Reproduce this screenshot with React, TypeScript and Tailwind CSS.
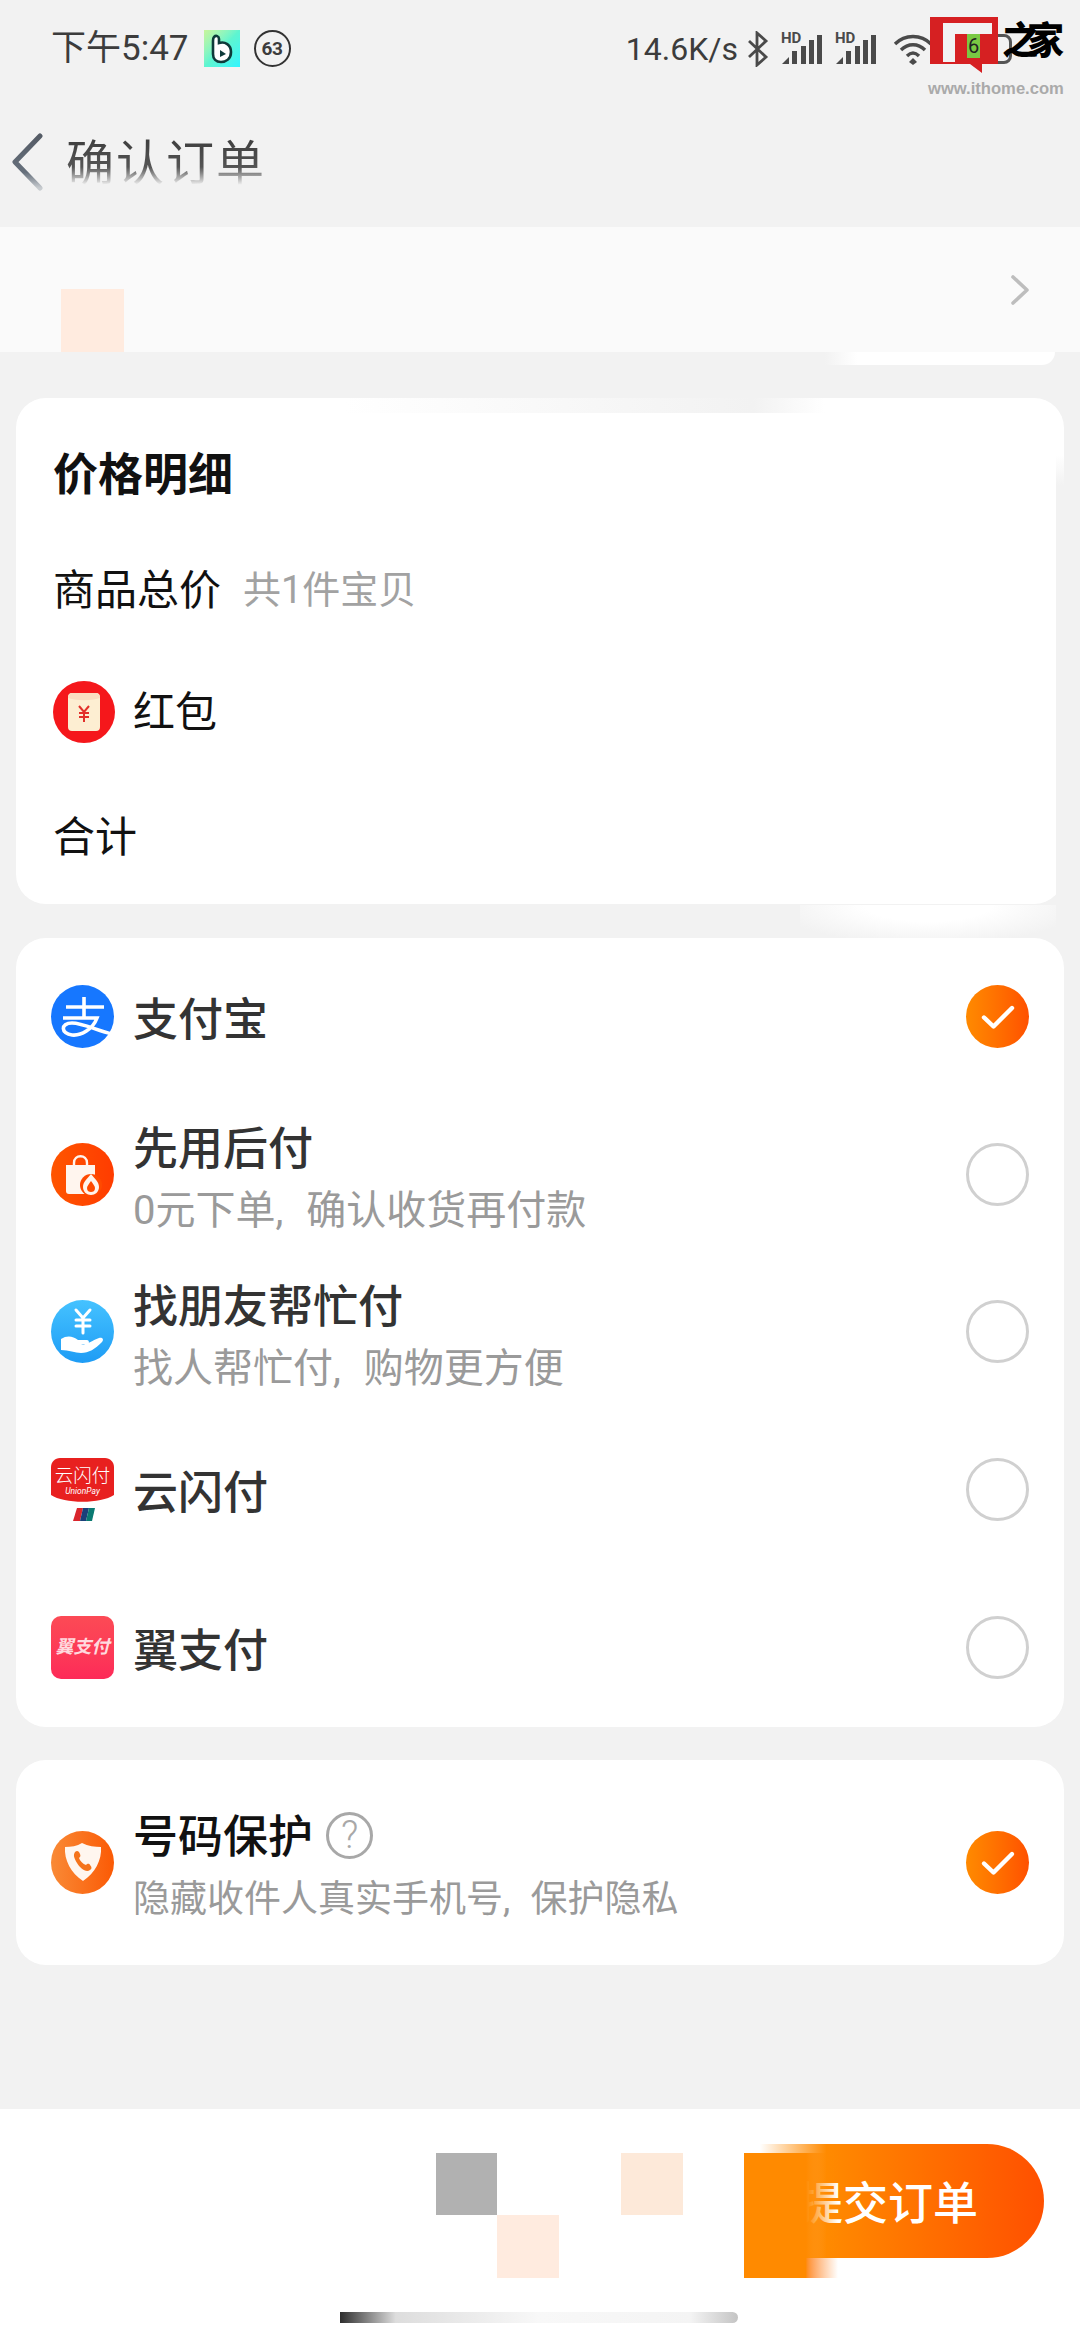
import React from "react";

function CheckOn() {
  return (
    <div className="w-[63px] h-[63px] rounded-full bg-gradient-to-r from-[#ff8a00] to-[#ff5000] flex items-center justify-center shrink-0">
      <svg width="36" height="28" viewBox="0 0 36 28" fill="none">
        <path d="M4 14.5 L13.5 23.5 L32 5" stroke="#fff" strokeWidth="4.4" strokeLinecap="round" strokeLinejoin="round" />
      </svg>
    </div>
  );
}

function CheckOff() {
  return <div className="w-[63px] h-[63px] rounded-full border-[3px] border-[#d0d0d0] shrink-0" />;
}

function Alipay() {
  return (
    <svg width="63" height="63" viewBox="0 0 63 63">
      <circle cx="31.5" cy="31.5" r="31.5" fill="#1677ff" />
      <g stroke="#fff" fill="none" strokeWidth="3.6">
        <path d="M15 22 H53" />
        <path d="M33 12 V33" />
        <path d="M12 33 H46 C42 44 30 51 21 50 C10 49 9 38 21 38 C32 38 47 46 61 49" />
      </g>
    </svg>
  );
}

function BuyLater() {
  return (
    <svg width="63" height="63" viewBox="0 0 63 63">
      <defs>
        <linearGradient id="bl" x1="0" x2="1" y1="0" y2="0">
          <stop offset="0" stopColor="#ff5500" />
          <stop offset="1" stopColor="#ff3c00" />
        </linearGradient>
      </defs>
      <circle cx="31.5" cy="31.5" r="31.5" fill="url(#bl)" />
      <path d="M15 22 H44 V48 C44 50 43 51 41 51 H18 C16 51 15 50 15 48 Z" fill="#fff5ee" />
      <path d="M23 26 V20 C23 11 36 11 36 20 V26" stroke="#fff5ee" strokeWidth="2.4" fill="none" />
      <circle cx="40" cy="42" r="11" fill="#ff4a00" />
      <path d="M40 31 C44 36 48 39 48 44 C48 49 44 52 40 52 C36 52 32 49 32 44 C32 39 36 36 40 31 Z" fill="#fff5ee" />
      <path d="M40 38 C42 41 44 43 44 45 C44 48 42 49 40 49 C38 49 36 48 36 45 C36 43 38 41 40 38 Z" fill="#ff4a00" />
    </svg>
  );
}

function FriendPay() {
  return (
    <svg width="63" height="63" viewBox="0 0 63 63">
      <defs>
        <linearGradient id="fp" x1="0" x2="0" y1="0" y2="1">
          <stop offset="0" stopColor="#45c2ff" />
          <stop offset="1" stopColor="#1e9cf5" />
        </linearGradient>
      </defs>
      <circle cx="31.5" cy="31.5" r="31.5" fill="url(#fp)" />
      <g stroke="#fff" strokeWidth="3" fill="none" strokeLinecap="round">
        <path d="M25 10 L32 18 L39 10" />
        <path d="M32 18 V33" />
        <path d="M25 20 H39" />
        <path d="M25 26 H39" />
      </g>
      <path d="M10 39 C16 35 22 36 27 40 H36 C38 40 39 43 36 44 H30 C34 46 40 41 48 38 C52 37 53 40 51 42 C44 49 38 53 30 53 C24 53 18 50 10 50 Z" fill="#fff" />
    </svg>
  );
}

function YunShanFu() {
  return (
    <svg width="63" height="63" viewBox="0 0 63 63">
      <path d="M9 0 H54 C59 0 63 4 63 9 V37 C50 46 13 46 0 37 V9 C0 4 4 0 9 0 Z" fill="#e8201f" />
      <text x="31.5" y="24" textAnchor="middle" fontSize="18.5" fill="#fff" fontFamily="Noto Sans CJK SC, sans-serif" fontWeight="300">云闪付</text>
      <text x="31.5" y="36" textAnchor="middle" fontSize="8.5" fill="#fff" fontStyle="italic" fontFamily="Roboto, sans-serif">UnionPay</text>
      <path d="M26 50 H32 L29 63 H22 Z" fill="#d9252c" />
      <path d="M32 50 H38 L35 63 H29 Z" fill="#1a3f7a" />
      <path d="M38 50 H44 L41 63 H35 Z" fill="#0a7a72" />
    </svg>
  );
}

function YiPay() {
  return (
    <div className="w-[63px] h-[63px] rounded-[10px] bg-gradient-to-b from-[#fc4a55] to-[#fd2a58] flex items-center justify-center">
      <span className="text-[18px] leading-none italic font-bold text-[#ffd9de] whitespace-nowrap">翼支付</span>
    </div>
  );
}

function PhoneShield() {
  return (
    <svg width="63" height="63" viewBox="0 0 63 63" className="shrink-0">
      <defs>
        <linearGradient id="ps" x1="0" x2="1" y1="0" y2="0">
          <stop offset="0" stopColor="#f98a36" />
          <stop offset="1" stopColor="#fb5a05" />
        </linearGradient>
      </defs>
      <circle cx="31.5" cy="31.5" r="31.5" fill="url(#ps)" />
      <path d="M31 12 C37 15 44 16 50 16 C51 29 44 42 32 50 C20 42 13 29 14 16 C20 16 26 15 31 12 Z" fill="#fff6ef" />
      <path d="M24 21 C26 19 28 20 29 23 C30 25 29 26 28 27 C29 30 32 33 35 34 C36 33 38 32 39 34 C41 36 41 38 39 39 C35 42 29 37 26 32 C23 27 22 24 24 21 Z" fill="#f5741c" />
    </svg>
  );
}

function RedPacket() {
  return (
    <svg width="62" height="62" viewBox="0 0 62 62">
      <circle cx="31" cy="31" r="31" fill="#f5171b" />
      <rect x="15" y="12" width="32" height="38" rx="4" fill="#fdeed2" />
      <path d="M15 17 C15 14 17 12 19 12 H43 C45 12 47 14 47 17 C37 20 25 20 15 17 Z" fill="#fbdcc0" />
      <g stroke="#e2302a" strokeWidth="2" fill="none">
        <path d="M26 25 L31 31 L36 25" />
        <path d="M31 31 V41" />
        <path d="M26 32 H36" />
        <path d="M26 36 H36" />
      </g>
    </svg>
  );
}

function Signal({ className }: { className?: string }) {
  return (
    <div className={"relative w-[41px] h-[32px] " + (className ?? "")}>
      <span className="absolute left-0 -top-[1px] text-[15px] leading-[13px] font-bold text-[#4a4a4a]" style={{ fontFamily: "Roboto, sans-serif" }}>HD</span>
      <svg className="absolute left-0 top-0" width="41" height="32" viewBox="0 0 41 32">
        <path d="M1 31 L8 24 V31 Z" fill="#4a4a4a" />
        <rect x="11" y="18" width="5" height="13" fill="#4a4a4a" />
        <rect x="20" y="13" width="5" height="18" fill="#4a4a4a" />
        <rect x="28" y="7" width="5" height="24" fill="#4a4a4a" />
        <rect x="36" y="2" width="5" height="29" fill="#4a4a4a" />
      </svg>
    </div>
  );
}

function StatusBar() {
  return (
    <div className="h-[96px] shrink-0 flex items-center pl-[51px] pr-[16px] pt-[1px] text-[#3c3c3c] text-[35px] leading-none">
      <span className="whitespace-nowrap">下午5:47</span>
      <div className="ml-[15px] w-[36px] h-[37px] bg-gradient-to-br from-[#c8f59a] via-[#5ef5d0] to-[#2ff5ff] flex items-center justify-center">
        <svg width="24" height="30" viewBox="0 0 24 30">
          <path d="M4 3 C6 1 9 2 9 5 V9 C15 7 21 11 21 18 C21 25 16 28 11 28 C6 28 3 25 3 20 V7 C3 5 3 4 4 3 Z" fill="#fff" stroke="#0e3a3a" strokeWidth="2.6" />
          <path d="M10 16 L16 20 L10 23 Z" fill="#0e3a3a" />
        </svg>
      </div>
      <div className="ml-[14px] w-[37px] h-[37px] rounded-full border-[2px] border-[#333] flex items-center justify-center">
        <span className="text-[19px] font-bold tracking-[-0.5px]">63</span>
      </div>
      <span className="ml-auto text-[32px] whitespace-nowrap">14.6K/s</span>
      <svg className="ml-[9px]" width="22" height="36" viewBox="0 0 22 36" fill="none">
        <path d="M2 10 L19 26 L10 34 V2 L19 10 L2 26" stroke="#4a4a4a" strokeWidth="2.8" />
      </svg>
      <Signal className="ml-[12px]" />
      <Signal className="ml-[13px]" />
      <svg className="ml-[16px]" width="42" height="32" viewBox="0 0 40 32" fill="none">
        <path d="M2 11 C12 1 28 1 38 11" stroke="#4a4a4a" strokeWidth="3.4" />
        <path d="M8 17 C15 10 25 10 32 17" stroke="#4a4a4a" strokeWidth="3.4" />
        <path d="M14 23 C18 19 22 19 26 23" stroke="#4a4a4a" strokeWidth="3.4" />
        <path d="M20 25 L24 29 L20 32 L16 29 Z" fill="#4a4a4a" />
      </svg>
      <div className="ml-[16px] w-[62px] h-[30px] rounded-[8px] border-[3px] border-[#555] mr-[52px]" />
    </div>
  );
}

function Header() {
  return (
    <div className="h-[131px] shrink-0 flex items-center">
      <svg className="ml-[11px]" width="34" height="58" viewBox="0 0 34 58" fill="none">
        <defs>
          <linearGradient id="bk" x1="0" x2="0" y1="0" y2="1">
            <stop offset="0" stopColor="#555c66" />
            <stop offset="0.7" stopColor="#66707c" />
            <stop offset="1" stopColor="#c8ccd0" />
          </linearGradient>
        </defs>
        <path d="M29 3 L4 29 L29 55" stroke="url(#bk)" strokeWidth="5" strokeLinecap="round" strokeLinejoin="round" />
      </svg>
      <span className="ml-[21px] mt-[5px] text-[48px] leading-[60px] tracking-[2px] bg-gradient-to-b from-[#3a3a3a] via-[#555] via-55% to-[#f2f2f2] to-85% bg-clip-text text-transparent whitespace-nowrap">
        确认订单
      </span>
    </div>
  );
}

function PayRow({ icon, title, sub, on }: { icon: React.ReactNode; title: string; sub?: string; on?: boolean }) {
  return (
    <div className="h-[157.6px] flex items-center pl-[35px] pr-[35px]">
      <div className="w-[63px] flex justify-center shrink-0">{icon}</div>
      <div className="ml-[19px] pt-[9px] flex-1 flex flex-col">
        <span className="text-[45px] leading-[60px] font-medium text-[#333]">{title}</span>
        {sub && <span className="mt-[5px] text-[40px] leading-[52px] text-[#9a9a9a] whitespace-nowrap [word-spacing:13px]">{sub}</span>}
      </div>
      {on ? <CheckOn /> : <CheckOff />}
    </div>
  );
}

export default function App() {
  return (
    <div
      className="relative w-[1080px] h-[2340px] overflow-hidden bg-[#f2f2f2] flex flex-col"
      style={{ fontFamily: '"Roboto", "Noto Sans CJK SC", sans-serif' }}
    >
      <StatusBar />
      <Header />

      <div className="h-[125px] shrink-0 bg-[#fafafa] flex items-center justify-end pr-[50px]">
        <svg width="20" height="32" viewBox="0 0 20 32" fill="none">
          <path d="M3 3 L17 16 L3 29" stroke="#bdbdbd" strokeWidth="3.6" strokeLinecap="round" strokeLinejoin="round" />
        </svg>
      </div>
      <div className="h-[13px] shrink-0 ml-[825px] mr-[25px] bg-gradient-to-r from-[#f2f2f2] to-white to-[14%] rounded-br-[26px]" />

      <div className="mt-[33px] mx-[16px] h-[506px] shrink-0 bg-white rounded-[30px] px-[37px] pt-[48px] text-[#111]">
        <div className="h-[60px] flex items-center text-[45px] font-bold">价格明细</div>
        <div className="mt-[54px] h-[60px] flex items-center">
          <span className="text-[42px]">商品总价</span>
          <span className="ml-[22px] text-[38px] text-[#a2a2a2]">共1件宝贝</span>
        </div>
        <div className="mt-[62px] h-[60px] flex items-center">
          <RedPacket />
          <span className="ml-[18px] text-[42px]">红包</span>
        </div>
        <div className="mt-[65px] h-[60px] flex items-center text-[42px]">合计</div>
      </div>

      <div className="mt-[34px] mx-[16px] h-[789px] shrink-0 bg-white rounded-[30px]">
        <PayRow icon={<Alipay />} title="支付宝" on />
        <PayRow icon={<BuyLater />} title="先用后付" sub="0元下单, 确认收货再付款" />
        <PayRow icon={<FriendPay />} title="找朋友帮忙付" sub="找人帮忙付, 购物更方便" />
        <PayRow icon={<YunShanFu />} title="云闪付" />
        <PayRow icon={<YiPay />} title="翼支付" />
      </div>

      <div className="mt-[33px] mx-[16px] h-[205px] shrink-0 bg-white rounded-[30px] flex items-center pl-[35px] pr-[35px]">
        <PhoneShield />
        <div className="ml-[19px] pt-[7px] flex-1 flex flex-col">
          <div className="flex items-center h-[60px]">
            <span className="text-[45px] font-medium text-[#111]">号码保护</span>
            <span className="ml-[13px] -mt-[4px] w-[47px] h-[47px] rounded-full border-[3px] border-[#a8a8a8] text-[#a8a8a8] text-[38px] font-light flex items-center justify-center">?</span>
          </div>
          <span className="mt-[7px] text-[37px] leading-[50px] text-[#9a9a9a] whitespace-nowrap [word-spacing:11px]">隐藏收件人真实手机号, 保护隐私</span>
        </div>
        <CheckOn />
      </div>

      <div className="mt-auto h-[231px] shrink-0 bg-white flex justify-end items-start pt-[35px] pr-[36px]">
        <div className="w-[290px] h-[114px] rounded-r-full bg-[linear-gradient(90deg,#ffffff_2%,#ff8a00_25%,#ff5000_100%)] flex items-center pl-[44px] pt-[7px]">
          <span className="text-[45px] leading-none font-medium text-white whitespace-nowrap">提交订单</span>
        </div>
      </div>

      {/* soft retouch marks around the cards */}
      <div className="absolute left-[345px] top-[398px] w-[480px] h-[15px] bg-[linear-gradient(90deg,#ffffff_0%,#f2f2f2_85%,#ffffff_100%)]" />
      <div className="absolute left-[1056px] top-[455px] w-[8px] h-[451px] bg-[linear-gradient(180deg,#ffffff_0px,#f2f2f2_30px)]" />
      <div className="absolute left-[800px] top-[905px] w-[256px] h-[33px] bg-[radial-gradient(ellipse_at_50%_0%,#ffffff_0%,#ffffff_35%,#f2f2f2_85%)]" />

      {/* mosaic patches covering redacted data */}
      <div className="absolute left-[61px] top-[289px] w-[63px] h-[63px] bg-[#ffebdf]" />
      <div className="absolute left-[436px] top-[2153px] w-[61px] h-[62px] bg-[#b1b1b1]" />
      <div className="absolute left-[497px] top-[2215px] w-[62px] h-[63px] bg-[#ffebdf]" />
      <div className="absolute left-[621px] top-[2153px] w-[62px] h-[62px] bg-[#fde9d9]" />
      <div className="absolute left-[744px] top-[2153px] w-[62px] h-[125px] bg-[#ff8a00]" />
      <div className="absolute left-[806px] top-[2153px] w-[32px] h-[105px] bg-gradient-to-r from-[#ff8a00] to-[#ff8a00]/0" />
      <div className="absolute left-[806px] top-[2258px] w-[32px] h-[20px] bg-gradient-to-r from-[#ff8a00] to-white" />

      {/* gesture bar */}
      <div className="absolute left-[340px] top-[2312px] w-[398px] h-[11px] rounded-r-[6px] bg-[linear-gradient(90deg,#2e2e2e_0%,#dddddd_14%,#f8f8f8_50%,#f4f4f4_88%,#c4c4c4_100%)]" />

      {/* watermark */}
      <div className="absolute left-[928px] top-[17px] w-[136px] h-[82px]">
        <svg className="absolute left-[2px] top-0" width="68" height="58" viewBox="0 0 68 58">
          <path d="M0 0 H68 V47 H52 V56 L40 47 H0 Z" fill="#d62022" />
        </svg>
        <div className="absolute left-[15px] top-[6px] w-[12px] h-[39px] bg-[#f2f2f2]" />
        <div className="absolute left-[27px] top-[6px] w-[37px] h-[11px] bg-[#f2f2f2]" />
        <div className="absolute left-[39px] top-[17px] w-[13px] h-[24px] bg-[#7ac943] text-center text-[20px] leading-[24px] text-[#222]">6</div>
        <span className="absolute left-[74px] top-[2px] text-[37px] leading-[46px] font-black tracking-[-12px] text-black whitespace-nowrap">之家</span>
        <span className="absolute left-0 top-[64px] text-[16.6px] leading-[16px] font-bold text-[#aaaaaa] whitespace-nowrap" style={{ fontFamily: '"Liberation Sans", sans-serif' }}>www.ithome.com</span>
      </div>
    </div>
  );
}
